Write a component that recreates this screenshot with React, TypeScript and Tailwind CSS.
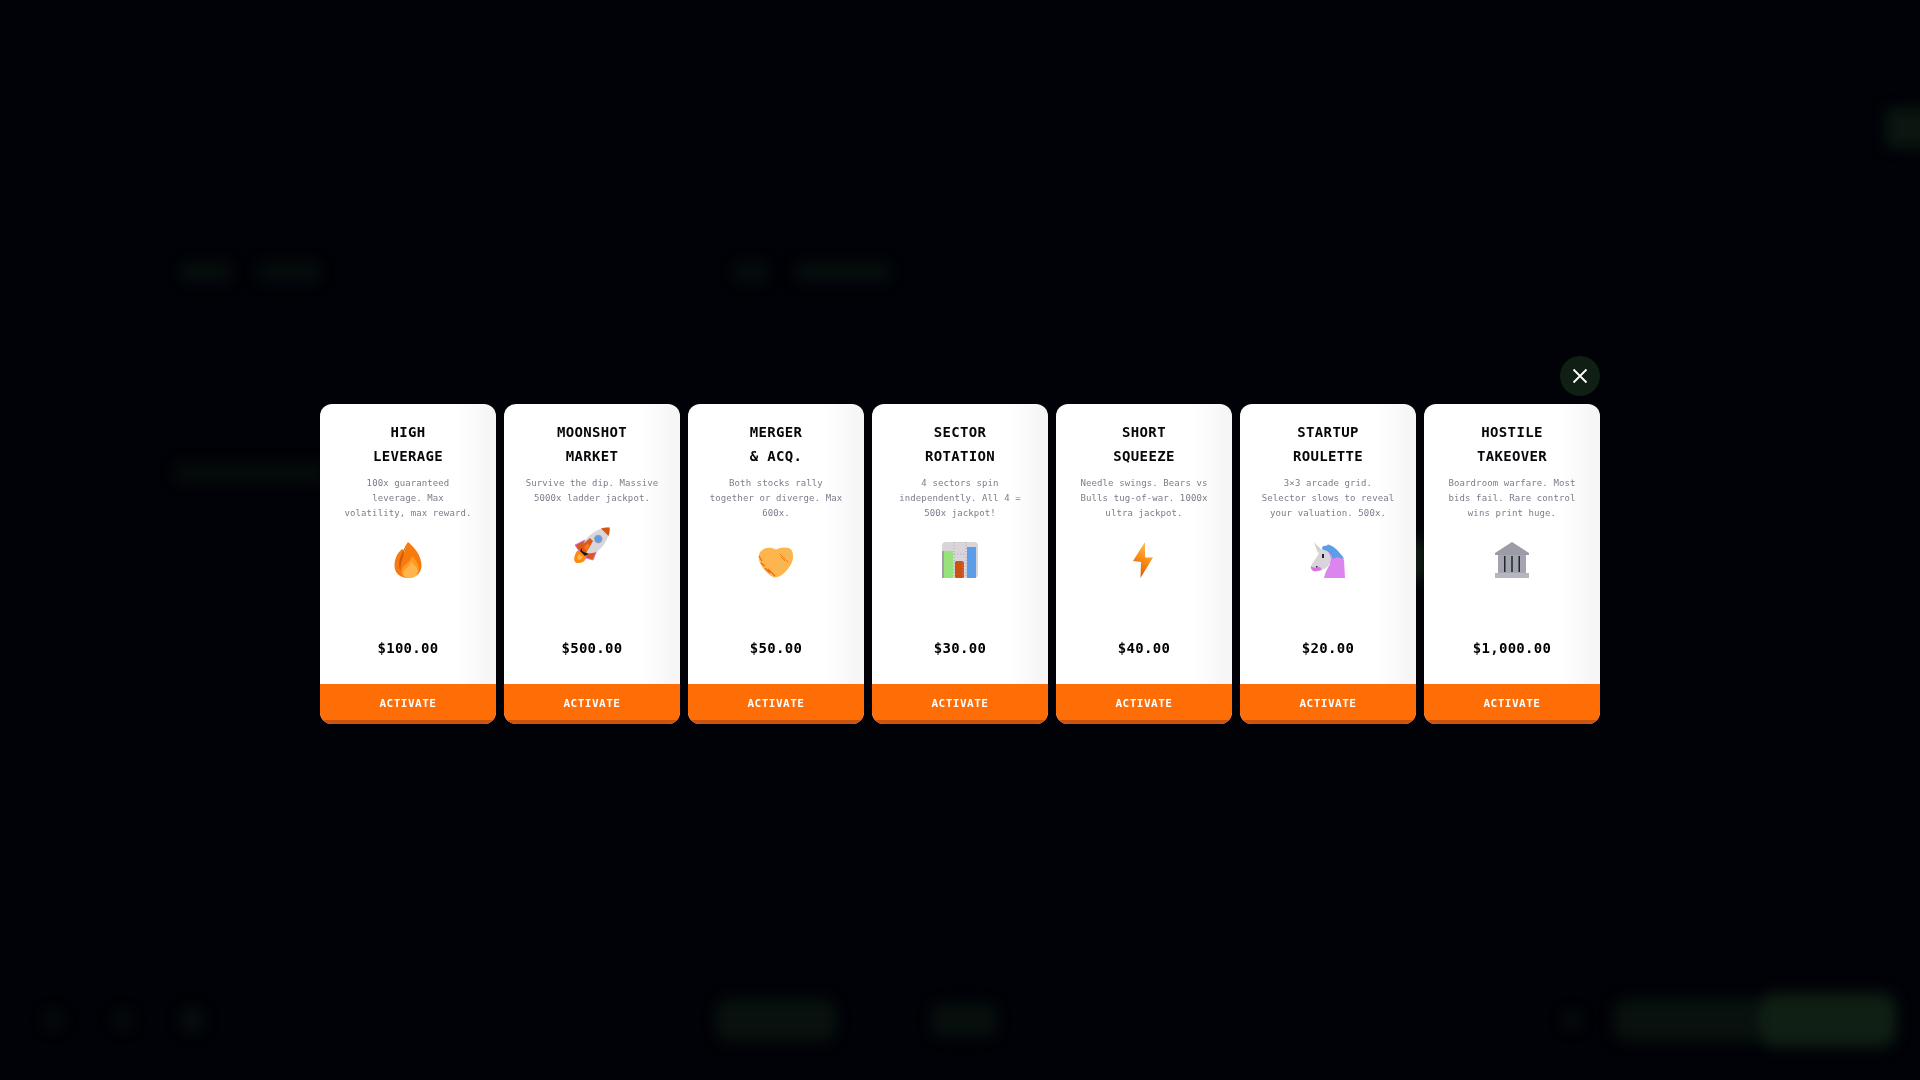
import React from "react";

function Fire() {
  return (
    <svg width="36" height="36" viewBox="0 0 36 36">
      <path d="M18 0C23 4 31.5 13 31.5 23.5C31.5 31 26 36 18 36C10 36 4.5 31 4.5 23.5C4.5 16 8 10.500 12 7C14 8 14.500 10 14.500 11C15 7 16 3 18 0Z" fill="#f97a0c" />
      <path d="M18 0C16 4 14 9 13 15C11.500 19 10 23 10.500 29C8 24 9 17 12 12C13 9 15 4 18 0Z" fill="#cf590d" />
      <path d="M22 14C27 19 29.500 24 29 28C28 33 24 36 18 36C13 36 10.500 32 12 27C14 22 20 21 22 14Z" fill="#ff9a22" />
      <path d="M21 20C25 23 28 26 27.500 30C26.500 34 23 36 18.500 36C14.500 36 12.500 32.500 14 29C15.500 26 20 25 21 20Z" fill="#ffb54e" />
    </svg>
  );
}

function Rocket() {
  return (
    <svg width="36" height="36" viewBox="0 0 36 36">
      <path d="M3 24L9 22L14 27L11 33C9 36 3 37 1 35C-1 32 1 27 3 24Z" fill="#ff8a12" />
      <path d="M5 27C3 29 3 32 4 33C6 33 8 32 9 30Z" fill="#ffb54e" />
      <path d="M1 18L11 13L13 17L8 24L5 24Z" fill="#dc5a14" stroke="#d873e0" strokeWidth="1" />
      <path d="M19 33L23 23L19 22L12 27L12 31Z" fill="#dc5a14" stroke="#d873e0" strokeWidth="1" />
      <path d="M8 21L14 27L11 29L6 24Z" fill="#15151c" />
      <path d="M35.500 0.500C36 8 32 16 26 22C21 27 15 27.500 10.500 24.500C8 20 9 15 14 10C20 4 28 0 35.500 0.500Z" fill="#d9d5dc" />
      <path d="M27 1.500C30.500 0.500 33 0.200 35.500 0.500C36 3 35.500 6 34.500 9Z" fill="#d4560f" />
      <circle cx="24.300" cy="12" r="4.200" fill="#9a9aa6" />
      <circle cx="24.300" cy="12" r="3" fill="#5b9de8" />
      <path d="M8 18L16 11L19 14L12 26L8 24Z" fill="#dc5a14" />
      <path d="M10 20L14 16L16 20L12 24Z" fill="#f27a1c" />
    </svg>
  );
}

function Handshake() {
  return (
    <svg width="36" height="36" viewBox="0 0 36 36">
      <path d="M3 9C7 5 13 5 18 7.500C23 5 30 4.500 33.500 8C36 12 35.500 19 32 24C28 30 22 36 16 35.500C11 33 5 28 2 21C0 16 0.500 12 3 9Z" fill="#ffb54e" />
      <path d="M22 12L30 20M23 15L27 19" stroke="#f2750c" strokeWidth="0.900" fill="none" />
      <path d="M1 14L4 19M3 21L7 24M7 26L12 31M10 27L16 33M13 30L17 34" stroke="#f2650a" strokeWidth="1.100" fill="none" />
      <path d="M29 9L31 11M24 23L26 21" stroke="#a8e08a" strokeWidth="1" fill="none" />
    </svg>
  );
}

function Chart() {
  return (
    <svg width="36" height="36" viewBox="0 0 36 36">
      <rect width="36" height="36" rx="4" fill="#d8d4da" />
      <path d="M12 0V36M24 0V36M12 12H24" stroke="#a0a0a8" strokeWidth="0.800" strokeDasharray="1 2" />
      <rect x="0" y="9" width="2" height="27" fill="#a0a0a8" />
      <rect x="2" y="9" width="9" height="27" fill="#97e27a" />
      <rect x="13" y="19" width="9" height="17" rx="1.500" fill="#cc5410" />
      <rect x="25" y="5" width="9" height="31" fill="#5b9de8" />
      <path d="M21 20V36" stroke="#e87ae0" strokeWidth="0.800" strokeDasharray="1 1.500" />
    </svg>
  );
}

function Bolt() {
  return (
    <svg width="36" height="36" viewBox="0 0 36 36">
      <defs>
        <linearGradient id="bolt-fill" x1="0.700" y1="0" x2="0.300" y2="1">
          <stop offset="0" stopColor="#ffc25e" />
          <stop offset="0.500" stopColor="#fb8a12" />
          <stop offset="1" stopColor="#d9560c" />
        </linearGradient>
      </defs>
      <path d="M19 0L7 19L15 20L14.500 36L27 15.500L19 15.500Z" fill="url(#bolt-fill)" />
    </svg>
  );
}

function Unicorn() {
  return (
    <svg width="36" height="36" viewBox="0 0 36 36">
      <path d="M14 36C15 30 18 26 20 22L14 8L26 8L34 18L35 36Z" fill="#dc85ef" />
      <path d="M12 8L4 0.500L8 11Z" fill="#cfd6c8" />
      <path d="M15 6C18 8 20 12 21 17C20 23 17 26 14 27L9 28.500L3 28C1 27 0.500 25 1.500 23L8 13C9 9 12 7 15 6Z" fill="#d8d4da" />
      <path d="M1 24C3 26 6 26 10 25L12 28L5 29.500C2 29 0.500 26.500 1 24Z" fill="#d873e0" />
      <path d="M12 7C12 4 14 3 16 4L18 2.500C22 3 28 8 33 15L34 17L27 15L23 17C22 13 19 9 14 8Z" fill="#5b9de8" />
      <rect x="12" y="12" width="2" height="4" fill="#22222a" />
      <rect x="6" y="24" width="1.500" height="1.500" fill="#22222a" />
    </svg>
  );
}

function Bank() {
  return (
    <svg width="36" height="36" viewBox="0 0 36 36">
      <path d="M18 0L35 11L35 13L1 13L1 11Z" fill="#9c9ca8" />
      <rect x="4" y="13" width="28" height="18" fill="#a4a4b0" />
      <rect x="10" y="14" width="1.500" height="16" fill="#1b2a22" />
      <rect x="17.250" y="14" width="1.500" height="16" fill="#1b2a22" />
      <rect x="24.500" y="14" width="1.500" height="16" fill="#1b2a22" />
      <rect x="1" y="31" width="34" height="5" fill="#b6b6c0" />
    </svg>
  );
}

const cards = [
  { l1: "HIGH", l2: "LEVERAGE", desc: "100x guaranteed leverage. Max volatility, max reward.", price: "$100.00", icon: <Fire />, lift: false },
  { l1: "MOONSHOT", l2: "MARKET", desc: "Survive the dip. Massive 5000x ladder jackpot.", price: "$500.00", icon: <Rocket />, lift: true },
  { l1: "MERGER", l2: "& ACQ.", desc: "Both stocks rally together or diverge. Max 600x.", price: "$50.00", icon: <Handshake />, lift: false },
  { l1: "SECTOR", l2: "ROTATION", desc: "4 sectors spin independently. All 4 = 500x jackpot!", price: "$30.00", icon: <Chart />, lift: false },
  { l1: "SHORT", l2: "SQUEEZE", desc: "Needle swings. Bears vs Bulls tug-of-war. 1000x ultra jackpot.", price: "$40.00", icon: <Bolt />, lift: false },
  { l1: "STARTUP", l2: "ROULETTE", desc: "3×3 arcade grid. Selector slows to reveal your valuation. 500x.", price: "$20.00", icon: <Unicorn />, lift: false },
  { l1: "HOSTILE", l2: "TAKEOVER", desc: "Boardroom warfare. Most bids fail. Rare control wins print huge.", price: "$1,000.00", icon: <Bank />, lift: false },
];

function Card({ c }: { c: (typeof cards)[number] }) {
  return (
    <div className="flex h-[320px] w-[176px] flex-col overflow-hidden rounded-xl bg-[linear-gradient(90deg,#ffffff_78%,#f6f6f7_96%)] text-center">
      <div className="flex flex-1 flex-col items-center px-[21px] pt-4">
        <div className="text-[14px] leading-[24px] font-bold tracking-[0.35px] text-[#05070a]">
          <div>{c.l1}</div>
          <div>{c.l2}</div>
        </div>
        <p className="mt-2 h-[60px] w-full text-[9px] leading-[15px] tracking-[0.1px] text-[#7c7c8a]">{c.desc}</p>
        <div className={c.lift ? "mt-1.5 h-9 w-9 -translate-y-[15px]" : "mt-1.5 h-9 w-9"}>{c.icon}</div>
        <div className="mt-[60px] text-[14px] leading-5 font-bold tracking-[0.3px] text-black">{c.price}</div>
      </div>
      <button className="h-10 shrink-0 bg-[#ff6d07] pt-px text-[11px] font-bold tracking-[0.5px] text-white shadow-[inset_0_-4px_0_#c9540f]">
        ACTIVATE
      </button>
    </div>
  );
}

function Backdrop() {
  return (
    <div className="flex h-full w-full flex-col blur-[7px]">
      <div className="flex h-[262px] justify-end pt-[108px]">
        <div className="-mr-4 h-[40px] w-[50px] rounded-lg bg-[#0f1f14] opacity-70" />
      </div>
      <div className="flex h-[201px] items-start pl-[181px]">
        <div className="h-[20px] w-[50px] rounded bg-[#0f1f14] opacity-40" />
        <div className="ml-[27px] h-[20px] w-[62px] rounded bg-[#0f1f14] opacity-35" />
        <div className="ml-[413px] h-[20px] w-[34px] rounded bg-[#0f1f14] opacity-35" />
        <div className="ml-[29px] h-[20px] w-[94px] rounded bg-[#0f1f14] opacity-40" />
      </div>
      <div className="h-[77px] pl-[175px]">
        <div className="h-[20px] w-[150px] rounded bg-[#0f1f14] opacity-35" />
      </div>
      <div className="flex h-[453px] justify-end pr-[495px]">
        <div className="h-[40px] w-[30px] rounded bg-[#0f1f14]" />
      </div>
      <div className="flex h-[54px] items-center">
        <div className="ml-[43px] h-[22px] w-[22px] rounded-full bg-[#0f1f14] opacity-30" />
        <div className="ml-[46px] h-[22px] w-[22px] rounded-full bg-[#0f1f14] opacity-30" />
        <div className="ml-[46px] h-[26px] w-[26px] rounded-full bg-[#0f1f14] opacity-40" />
        <div className="ml-[511px] h-[42px] w-[120px] rounded-xl bg-[#0f1f14] opacity-50" />
        <div className="ml-[96px] h-[34px] w-[64px] rounded-lg bg-[#0f1f14] opacity-45" />
        <div className="ml-[566px] h-[20px] w-[20px] rounded-full bg-[#0f1f14] opacity-35" />
        <div className="ml-[32px] h-[42px] w-[145px] rounded-l-xl bg-[#0f1f14] opacity-50" />
        <div className="h-[54px] w-[137px] rounded-2xl bg-[#0f1f14]" />
      </div>
    </div>
  );
}

export default function App() {
  return (
    <div className="relative h-[1080px] w-[1920px] overflow-hidden bg-[#010207] font-['DejaVu_Sans_Mono',monospace]">
      <Backdrop />
      <div className="absolute inset-0 flex items-center justify-center">
        <div className="flex flex-col items-end gap-2">
          <button className="flex h-10 w-10 items-center justify-center rounded-full bg-[#0f1f14]">
            <svg width="18" height="18" viewBox="0 0 18 18" fill="none" stroke="#ffffff" strokeWidth="1.800">
              <path d="M2.500 2.500L15.500 15.500M15.500 2.500L2.500 15.500" />
            </svg>
          </button>
          <div className="flex gap-2">
            {cards.map((c) => (
              <Card key={c.l1} c={c} />
            ))}
          </div>
        </div>
      </div>
    </div>
  );
}
